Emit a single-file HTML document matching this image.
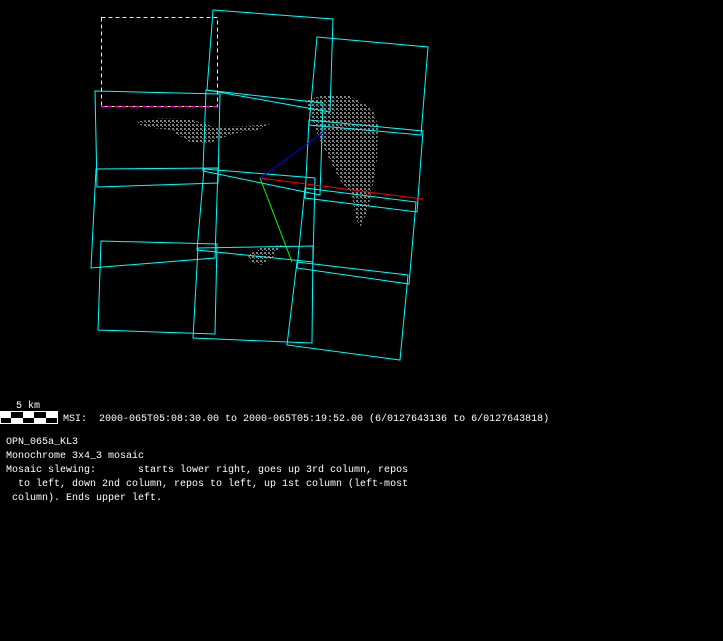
<!DOCTYPE html>
<html><head><meta charset="utf-8"><style>
html,body{margin:0;padding:0;background:#000;width:723px;height:641px;overflow:hidden}
.t{position:absolute;color:#fff;font-family:"Liberation Mono","DejaVu Sans Mono",monospace;font-size:10px;line-height:14px;white-space:pre}
</style></head><body>
<svg width="723" height="641" style="position:absolute;left:0;top:0" xmlns="http://www.w3.org/2000/svg">
<defs><pattern id="p" width="4" height="4" patternUnits="userSpaceOnUse"><rect width="2" height="2" fill="#808080"/><rect x="2" y="2" width="1" height="1" fill="#808080"/></pattern></defs>
<g fill="url(#p)">
<path d="M135,122 L160,118 L190,119 L215,127 L245,126 L270,124 L258,130 L232,134 L210,143 L190,142 L170,130 L145,127 Z"/>
<path d="M305,100 L325,95 L350,96 L372,108 L378,125 L377,160 L372,190 L368,210 L360,228 L355,215 L352,195 L340,180 L330,160 L320,140 L312,120 Z"/>
<path d="M248,255 L262,247 L282,245 L272,258 L262,265 L250,262 Z"/>
</g>
<g fill="none" stroke="#00ffff" stroke-width="1">
<polygon points="95,91 220,94 218,183 97,187"/>
<polygon points="96,169 218,168 215,258 91,268"/>
<polygon points="101,241 217,244 215,334 98,330"/>
<polygon points="213,10 333,19 330,112 207,90"/>
<polygon points="206,90 323,103 320,195 203,171"/>
<polygon points="204,169 315,178 313,262 197,250"/>
<polygon points="198,248 313,246 312,343 193,338"/>
<polygon points="317,37 428,47 421,135 309,125"/>
<polygon points="309,120 423,131 417,212 305,198"/>
<polygon points="305,188 416,202 409,284 297,268"/>
<polygon points="297,262 408,275 400,360 287,345"/>
</g>
<rect x="101.5" y="17.5" width="116" height="89" fill="none" stroke="#ffff66" stroke-dasharray="4,3"/>
<line x1="101" y1="106.5" x2="218" y2="106.5" stroke="#ff00ff" stroke-dasharray="4,3"/>
<line x1="260" y1="178" x2="423" y2="199" stroke="#ff0000"/>
<line x1="260" y1="178" x2="292" y2="262" stroke="#00ff00"/>
<line x1="260" y1="178" x2="325" y2="131" stroke="#0000ff"/>
<rect x="0.5" y="411.5" width="57" height="12" fill="#000" stroke="#fff"/>
<g fill="#fff">
<rect x="0" y="412" width="11" height="6"/><rect x="23" y="412" width="11" height="6"/><rect x="46" y="412" width="11" height="6"/>
<rect x="11" y="418" width="12" height="6"/><rect x="34" y="418" width="12" height="6"/>
</g>
</svg>
<div class="t" style="left:16px;top:400px">5 km</div>
<div class="t" style="left:63px;top:413px">MSI:  2000-065T05:08:30.00 to 2000-065T05:19:52.00 (6/0127643136 to 6/0127643818)</div>
<div class="t" style="left:6px;top:436px">OPN_065a_KL3
Monochrome 3x4_3 mosaic
Mosaic slewing:       starts lower right, goes up 3rd column, repos
  to left, down 2nd column, repos to left, up 1st column (left-most
 column). Ends upper left.</div>
</body></html>
